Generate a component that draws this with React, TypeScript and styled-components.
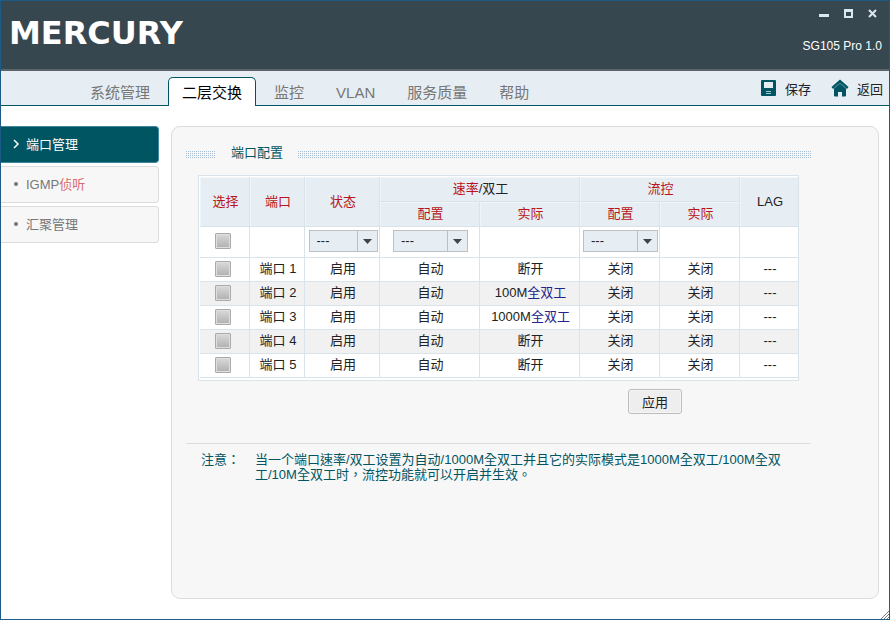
import React, { useState } from "react";
import styled, { createGlobalStyle, css } from "styled-components";

const latin = '"Liberation Sans", "Noto Sans CJK SC", sans-serif';
const teal = "#005563";
const line = "#d8e4ea";

const GlobalStyle = createGlobalStyle`
  *, *::before, *::after { box-sizing: border-box; }
  body { margin: 0; font-family: ${latin}; font-size: 13px; color: #222; }
  button, select, input { font: inherit; color: inherit; margin: 0; }
`;

const Window = styled.div`
  position: relative;
  display: flex;
  flex-direction: column;
  min-height: 100vh;
  border: 1px solid #1d5a85;
  background: #fff;
`;

const Header = styled.header`
  display: flex;
  justify-content: space-between;
  height: 70px;
  padding: 0 7px 0 8px;
  background: #37474f;
  border-bottom: 2px solid #5b6469;
  color: #fff;
`;

const Logo = styled.h1`
  margin: 0;
  padding-top: 14px;
  font: bold 32px/36px "DejaVu Sans", sans-serif;
`;

const HeaderSide = styled.div`
  display: flex;
  flex-direction: column;
  align-items: flex-end;
  font-size: 12px;
`;

const WindowButtons = styled.div`
  display: flex;
  gap: 8px;
  padding: 4px 2px 0 0;
`;

const WindowButton = styled.button`
  display: grid;
  place-items: center;
  width: 16px;
  height: 17px;
  padding: 0;
  border: 0;
  background: none;
`;

const Model = styled.span`
  margin-top: 15px;
  line-height: 18px;
`;

const NavBar = styled.nav`
  display: flex;
  justify-content: space-between;
  height: 35px;
  padding: 0 6px 0 73px;
  background: #e6eef4;
  border-bottom: 1px solid ${teal};
`;

const Tabs = styled.div`
  display: flex;
  align-items: flex-end;
  height: 35px;
`;

const Tab = styled.a<{ $active?: boolean }>`
  height: 29px;
  padding: 0 16px;
  font-size: 15px;
  line-height: 31px;
  color: #777;
  text-decoration: none;
  white-space: nowrap;
  ${(p) =>
    p.$active &&
    css`
      padding: 0 13px;
      margin: 0 2px;
      color: #000;
      background: #fff;
      border: 1px solid ${teal};
      border-bottom: 0;
      border-radius: 5px 5px 0 0;
      line-height: 29px;
    `}
`;

const Actions = styled.div`
  display: flex;
  gap: 20px;
`;

const Action = styled.button`
  display: flex;
  align-items: center;
  gap: 8px;
  height: 34px;
  padding: 0;
  border: 0;
  background: none;
  white-space: nowrap;
`;

const Body = styled.div`
  display: flex;
  flex: 1;
  gap: 12px;
  padding: 20px 10px 20px 0;
`;

const Sidebar = styled.aside`
  display: flex;
  flex: none;
  flex-direction: column;
  gap: 3px;
  width: 158px;
`;

const SideLink = styled.a<{ $active?: boolean }>`
  display: flex;
  align-items: center;
  gap: 5px;
  height: 37px;
  padding: 0 0 2px 10px;
  border: 1px solid ${(p) => (p.$active ? "#3f86a0" : "#dcdcdc")};
  border-left: 0;
  border-radius: 0 4px 4px 0;
  background: ${(p) => (p.$active ? teal : "#f7f7f7")};
  color: ${(p) => (p.$active ? "#fff" : "#777")};
  text-decoration: none;
`;

const Panel = styled.main`
  flex: 1;
  min-width: 0;
  padding: 16px 67px 16px 14px;
  border: 1px solid #dcdcdc;
  border-radius: 9px;
  background: #f7f7f7;
`;

const Title = styled.h2`
  display: flex;
  align-items: center;
  gap: 15px;
  margin: 0;
  height: 20px;
  font-size: 13px;
  font-weight: normal;
  line-height: 18px;
  color: ${teal};
  white-space: nowrap;
`;

const Dots = styled.span<{ $short?: boolean }>`
  flex: ${(p) => (p.$short ? "0 0 30px" : "1")};
  height: 7px;
  margin-top: 3px;
  background:
    repeating-linear-gradient(90deg, transparent 0 1px, #f7f7f7 1px 2px),
    repeating-linear-gradient(#a9bfd3 0 1px, #f7f7f7 1px 2px);
`;

const Table = styled.table`
  width: 601px;
  margin: 12px 0 0 12px;
  table-layout: fixed;
  border-collapse: separate;
  border-spacing: 0;
  border: 1px solid ${line};
  padding: 1px 0 2px 1px;
  background: #fff;
`;

const HeadCell = styled.th<{ $last?: boolean }>`
  height: 25px;
  padding: 0 0 0 2px;
  font-weight: normal;
  line-height: 18px;
  text-align: center;
  color: #222;
  background: #e6eef4;
  border-right: ${(p) => (p.$last ? 0 : 1)}px solid ${line};
  border-bottom: 1px solid ${line};
  box-shadow: inset 1px 1px #eff5f9;
`;

const tones = { red: "#b81420", rose: "#d96b6b", blue: "#24248c" };

const Tinted = styled.span<{ $tone: keyof typeof tones }>`
  color: ${(p) => tones[p.$tone]};
`;

const Row = styled.tr<{ $tint?: boolean }>`
  background: ${(p) => (p.$tint ? "#f1f1f1" : "#fff")};
`;

const Cell = styled.td<{ $tall?: boolean }>`
  height: ${(p) => (p.$tall ? 31 : 24)}px;
  padding: 0 0 2px 2px;
  line-height: 18px;
  text-align: center;
  white-space: nowrap;
  border-right: 1px solid ${line};
  border-bottom: 1px solid ${line};
  &:last-child { border-right: 0; }
`;

const CheckCell = styled(Cell)`
  padding: 0 4px 2px 0;
`;

const Check = styled.input`
  display: block;
  appearance: none;
  width: 16px;
  height: 16px;
  && { margin: 0 auto; }
  border: 1px solid #aaa;
  border-radius: 1px;
  background: linear-gradient(#d9d9d9, #b0b0b0);
  box-shadow: inset 0 0 0 1px #dedede;
  &:checked { background: ${teal}; }
`;

const SelectBox = styled.span<{ $wide?: boolean }>`
  display: grid;
  grid-template-columns: 1fr 20px;
  width: ${(p) => (p.$wide ? 75 : 69)}px;
  height: 22px;
  margin: 0 auto;
  border: 1px solid #bfbfbf;
  background: #e6eef4;
`;

const Select = styled.select`
  grid-area: 1 / 1 / 2 / 3;
  appearance: none;
  height: 20px;
  padding: 0 0 0 7px;
  border: 0;
  background: none;
`;

const Arrow = styled.span`
  grid-area: 1 / 2 / 2 / 3;
  display: grid;
  place-items: center;
  border-left: 1px solid #bfbfbf;
  pointer-events: none;
`;

const Apply = styled.button`
  display: block;
  width: 54px;
  height: 25px;
  margin: 8px 0 0 442px;
  padding: 0;
  border: 1px solid #bdbdbd;
  border-radius: 3px;
  background: #eee;
  box-shadow: inset 0 0 0 1px #f6f6f6;
`;

const Note = styled.div`
  display: flex;
  gap: 14px;
  margin-top: 29px;
  padding: 8px 24px 0 15px;
  border-top: 1px solid #dcdcdc;
  line-height: 15px;
  color: ${teal};
  font-family: "Liberation Sans", "Noto Sans CJK TC", "Noto Sans CJK SC", sans-serif;
`;

const NoteLabel = styled.strong`
  flex: 0 0 40px;
  font-weight: normal;
`;

const NoteText = styled.p`
  margin: 0;
  word-break: break-all;
`;

const Grip = styled.svg`
  position: absolute;
  right: 0;
  bottom: 0;
`;

const SaveIcon = () => (
  <svg width="17" height="17" viewBox="0 0 17 17" aria-hidden="true">
    <rect x="1" width="15" height="16" rx="1" fill={teal} />
    <rect x="4" y="2" width="9" height="6" fill="#e6eef4" />
    <path d="M6 11.5h5M6 13.5h5" stroke="#a9c4cc" />
  </svg>
);

const HomeIcon = () => (
  <svg width="18" height="18" viewBox="0 0 18 18" aria-hidden="true">
    <path d="M3 8h12v8.5q0 1-1 1h-3V13H7v4.5H4q-1 0-1-1Z" fill={teal} />
    <path d="M9 .5 17.5 8 16 10 9 4 2 10 .5 8Z" fill={teal} />
    <path d="M9 3.5 15 9.5v2H3v-2Z" fill={teal} />
    <path d="M2.5 9.8 9 4.2l6.5 5.6" fill="none" stroke="#6fa0aa" strokeWidth=".8" />
  </svg>
);

const Picker = ({ label, wide }: { label: string; wide?: boolean }) => (
  <SelectBox $wide={wide}>
    <Select aria-label={label}>
      <option>---</option>
      <option>启用</option>
      <option>自动</option>
      <option>关闭</option>
    </Select>
    <Arrow>
      <svg width="9" height="5" viewBox="0 0 9 5" aria-hidden="true">
        <path d="M0 0h9L4.5 5Z" fill="#444" />
      </svg>
    </Arrow>
  </SelectBox>
);

const tabs = ["系统管理", "二层交换", "监控", "VLAN", "服务质量", "帮助"];
const pages = [
  { name: "端口管理" },
  { name: "IGMP", tail: "侦听" },
  { name: "汇聚管理" },
];
const ports = [
  { actual: "断开" },
  { actual: "100M", duplex: "全双工" },
  { actual: "1000M", duplex: "全双工" },
  { actual: "断开" },
  { actual: "断开" },
];
const columns = [50, 55, 75, 100, 100, 80, 80, 58];

export default function App() {
  const [tab, setTab] = useState(1);
  const [page, setPage] = useState(0);
  return (
    <>
      <GlobalStyle />
      <Window>
        <Header>
          <Logo>MERCURY</Logo>
          <HeaderSide>
            <WindowButtons>
              <WindowButton aria-label="最小化">
                <svg width="10" height="10"><path d="M0 6.5h10" stroke="#dbe8f1" strokeWidth="3" /></svg>
              </WindowButton>
              <WindowButton aria-label="最大化">
                <svg width="9" height="9"><path d="M1 1h7v7H1ZM0 2h9" fill="none" stroke="#dbe8f1" strokeWidth="2" /></svg>
              </WindowButton>
              <WindowButton aria-label="关闭">
                <svg width="9" height="9"><path d="m1 1 7 7M8 1 1 8" stroke="#dbe8f1" strokeWidth="2" /></svg>
              </WindowButton>
            </WindowButtons>
            <Model>SG105 Pro 1.0</Model>
          </HeaderSide>
        </Header>
        <NavBar>
          <Tabs>
            {tabs.map((name, i) => (
              <Tab key={name} href="#" $active={i === tab} onClick={() => setTab(i)}>{name}</Tab>
            ))}
          </Tabs>
          <Actions>
            <Action><SaveIcon />保存</Action>
            <Action><HomeIcon />返回</Action>
          </Actions>
        </NavBar>
        <Body>
          <Sidebar>
            {pages.map(({ name, tail }, i) => (
              <SideLink key={name} href="#" $active={i === page} onClick={() => setPage(i)}>
                <svg width="10" height="10" aria-hidden="true">
                  {i === page
                    ? <path d="m3 1 4 4-4 4" fill="none" stroke="#fff" strokeWidth="1.5" />
                    : <circle cx="5" cy="5" r="2" fill="#777" />}
                </svg>
                <span>{name}{tail && <Tinted $tone="rose">{tail}</Tinted>}</span>
              </SideLink>
            ))}
          </Sidebar>
          <Panel>
            <Title><Dots $short />端口配置<Dots /></Title>
            <Table>
              <colgroup>{columns.map((w, i) => <col key={i} width={w} />)}</colgroup>
              <thead>
                <tr>
                  <HeadCell rowSpan={2}><Tinted $tone="red">选择</Tinted></HeadCell>
                  <HeadCell rowSpan={2}><Tinted $tone="red">端口</Tinted></HeadCell>
                  <HeadCell rowSpan={2}><Tinted $tone="red">状态</Tinted></HeadCell>
                  <HeadCell colSpan={2}><Tinted $tone="red">速率</Tinted>/双工</HeadCell>
                  <HeadCell colSpan={2}><Tinted $tone="red">流控</Tinted></HeadCell>
                  <HeadCell rowSpan={2} $last>LAG</HeadCell>
                </tr>
                <tr>
                  {["配置", "实际", "配置", "实际"].map((name, i) => (
                    <HeadCell key={i}><Tinted $tone="red">{name}</Tinted></HeadCell>
                  ))}
                </tr>
              </thead>
              <tbody>
                <Row>
                  <CheckCell $tall><Check type="checkbox" aria-label="全选" /></CheckCell>
                  <Cell />
                  <Cell><Picker label="状态" /></Cell>
                  <Cell><Picker label="速率/双工配置" wide /></Cell>
                  <Cell />
                  <Cell><Picker label="流控配置" wide /></Cell>
                  <Cell />
                  <Cell />
                </Row>
                {ports.map(({ actual, duplex }, i) => (
                  <Row key={i} $tint={i % 2 === 1}>
                    <CheckCell><Check type="checkbox" aria-label={`端口 ${i + 1}`} /></CheckCell>
                    <Cell>端口 {i + 1}</Cell>
                    <Cell>启用</Cell>
                    <Cell>自动</Cell>
                    <Cell>{actual}{duplex && <Tinted $tone="blue">{duplex}</Tinted>}</Cell>
                    <Cell>关闭</Cell>
                    <Cell>关闭</Cell>
                    <Cell>---</Cell>
                  </Row>
                ))}
              </tbody>
            </Table>
            <Apply>应用</Apply>
            <Note>
              <NoteLabel>注意：</NoteLabel>
              <NoteText>
                当一个端口速率/双工设置为自动/1000M全双工并且它的实际模式是1000M全双工/100M全双工/10M全双工时，流控功能就可以开启并生效。
              </NoteText>
            </Note>
          </Panel>
        </Body>
        <Grip width="8" height="8" aria-hidden="true">
          <path d="M0 8 8 0M3 8l5-5M6 8l2-2" stroke="#777" />
        </Grip>
      </Window>
    </>
  );
}
